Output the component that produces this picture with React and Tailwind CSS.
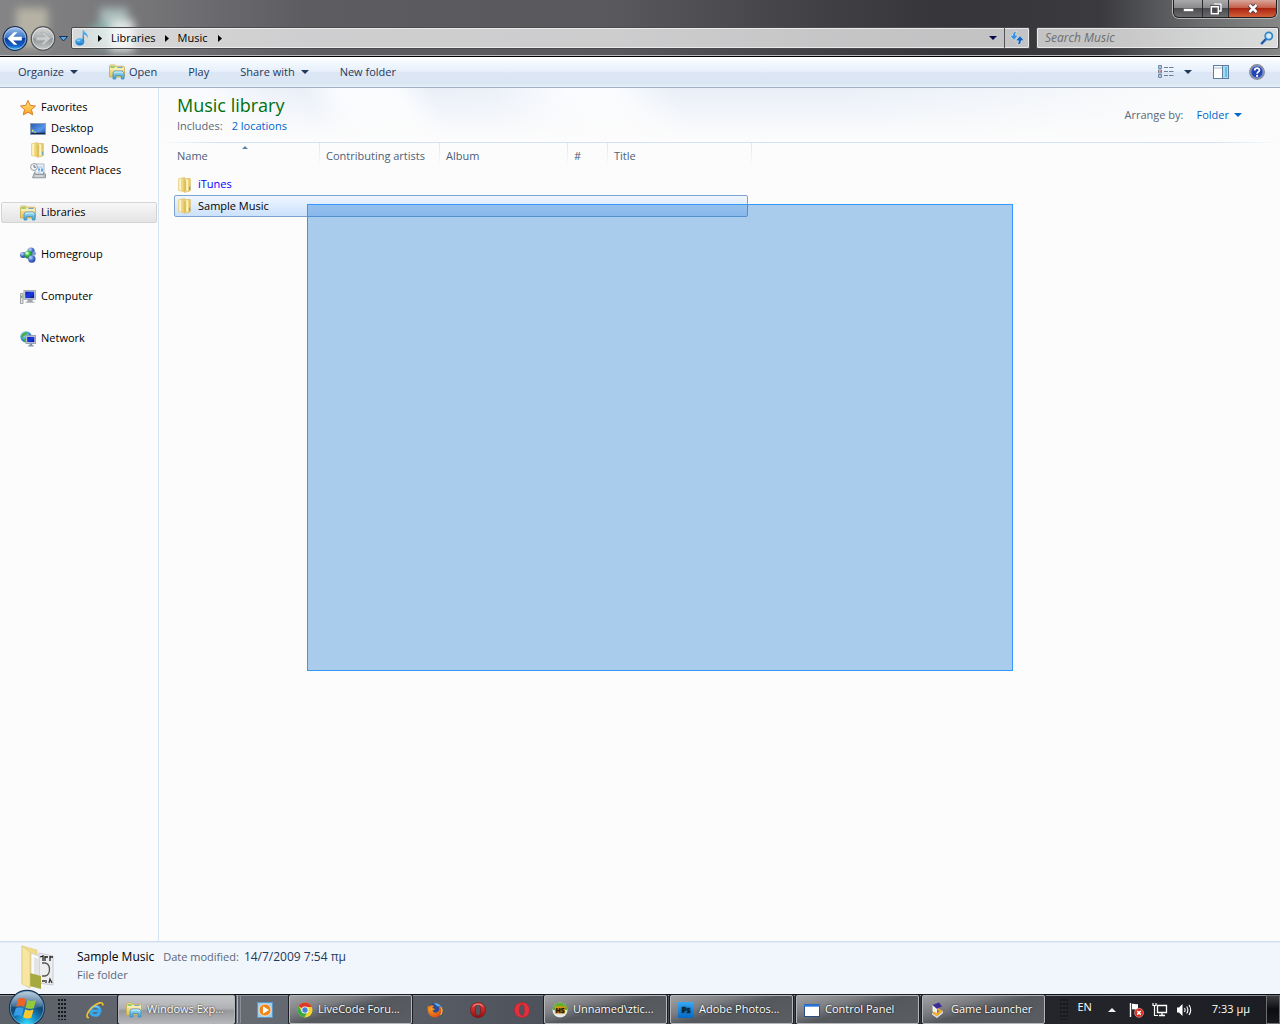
import React from "react";

const Svg = ({ size = "size-4", box = "0 0 16 16", children }) => (
  <svg className={`${size} shrink-0`} viewBox={box} aria-hidden="true">
    {children}
  </svg>
);

const Defs = () => (
  <svg className="absolute size-0" aria-hidden="true">
    <defs>
      <linearGradient id="gold" x1="0" y1="0" x2="1" y2="0">
        <stop offset="0" stopColor="#faefb0" />
        <stop offset="1" stopColor="#e6c863" />
      </linearGradient>
      <linearGradient id="goldV" x1="0" y1="0" x2="0" y2="1">
        <stop offset="0" stopColor="#fbf0ae" />
        <stop offset="1" stopColor="#e4c25c" />
      </linearGradient>
      <linearGradient id="aqua" x1="0" y1="0" x2="0" y2="1">
        <stop offset="0" stopColor="#a9e0f5" />
        <stop offset="1" stopColor="#3a9fd2" />
      </linearGradient>
      <linearGradient id="star" x1="0" y1="0" x2="0" y2="1">
        <stop offset="0" stopColor="#ffe98a" />
        <stop offset="1" stopColor="#f9a21c" />
      </linearGradient>
      <linearGradient id="screen" x1="0" y1="0" x2="1" y2="1">
        <stop offset="0" stopColor="#0a1fae" />
        <stop offset="0.5" stopColor="#1a3be0" />
        <stop offset="1" stopColor="#0a1488" />
      </linearGradient>
      <linearGradient id="desk" x1="0" y1="0" x2="1" y2="1">
        <stop offset="0" stopColor="#2458b8" />
        <stop offset="0.6" stopColor="#5b97e6" />
        <stop offset="1" stopColor="#1d4ba6" />
      </linearGradient>
      <radialGradient id="ballBlue" cx="0.35" cy="0.3" r="0.8">
        <stop offset="0" stopColor="#c8d8fa" />
        <stop offset="0.5" stopColor="#4a72cc" />
        <stop offset="1" stopColor="#1c3a94" />
      </radialGradient>
      <radialGradient id="ballGreen" cx="0.35" cy="0.3" r="0.8">
        <stop offset="0" stopColor="#a8f2a0" />
        <stop offset="0.5" stopColor="#2fae3a" />
        <stop offset="1" stopColor="#0d6a20" />
      </radialGradient>
      <radialGradient id="globe" cx="0.35" cy="0.3" r="0.8">
        <stop offset="0" stopColor="#b8ecfa" />
        <stop offset="0.6" stopColor="#2b8fcf" />
        <stop offset="1" stopColor="#0d4a8c" />
      </radialGradient>
      <linearGradient id="backBtn" x1="0" y1="0" x2="0" y2="1">
        <stop offset="0" stopColor="#a4c6ec" />
        <stop offset="0.48" stopColor="#3670c4" />
        <stop offset="0.5" stopColor="#0c3c9c" />
        <stop offset="0.8" stopColor="#1460c4" />
        <stop offset="1" stopColor="#40c4fa" />
      </linearGradient>
      <linearGradient id="fwdBtn" x1="0" y1="0" x2="0" y2="1">
        <stop offset="0" stopColor="#d8d8d8" />
        <stop offset="0.48" stopColor="#adb0b0" />
        <stop offset="0.52" stopColor="#8f9494" />
        <stop offset="1" stopColor="#c8cccc" />
      </linearGradient>
      <linearGradient id="note" x1="0" y1="0" x2="0" y2="1">
        <stop offset="0" stopColor="#5ec0f0" />
        <stop offset="1" stopColor="#1676c8" />
      </linearGradient>
      <radialGradient id="orb" cx="0.5" cy="0.95" r="0.95">
        <stop offset="0" stopColor="#38dcff" />
        <stop offset="0.3" stopColor="#178cc4" />
        <stop offset="0.6" stopColor="#0f4878" />
        <stop offset="1" stopColor="#547fa8" />
      </radialGradient>
      <linearGradient id="orbShine" x1="0" y1="0" x2="0" y2="1">
        <stop offset="0" stopColor="#fff" stopOpacity="0.6" />
        <stop offset="1" stopColor="#fff" stopOpacity="0.1" />
      </linearGradient>
      <linearGradient id="ps" x1="0" y1="0" x2="0" y2="1">
        <stop offset="0" stopColor="#3aa8f4" />
        <stop offset="1" stopColor="#0668c4" />
      </linearGradient>
      <linearGradient id="operaRed" x1="0" y1="0" x2="0" y2="1">
        <stop offset="0" stopColor="#e8443c" />
        <stop offset="1" stopColor="#9c0c10" />
      </linearGradient>
      <radialGradient id="fox" cx="0.3" cy="0.3" r="0.9">
        <stop offset="0" stopColor="#f8a020" />
        <stop offset="1" stopColor="#d83c10" />
      </radialGradient>
    </defs>
  </svg>
);

const Arrow = ({ className = "text-[#1e395b]" }) => (
  <svg className={`h-1 w-2 shrink-0 ${className}`} viewBox="0 0 8 4" aria-hidden="true">
    <path d="M0 0h8L4 4z" fill="currentColor" />
  </svg>
);

const LibrariesIcon = () => (
  <Svg>
    <path d="M.5 13V2.2L1.3 1h4.5l1 1.2h7.7l1 1V13z" fill="url(#goldV)" stroke="#c9a94c" strokeWidth=".8" />
    <path d="M1.500 3h4.200" stroke="#55b848" strokeWidth="1.200" />
    <path d="M8.500 3.400h5" stroke="#5a9ed6" strokeWidth="1" />
    <path d="M1 5h14" stroke="#fff8d0" strokeWidth="1" />
    <path d="M4 15V9l1.500-2h7.800L15 9v6h-2.700v-3.400H6.800V15z" fill="url(#aqua)" stroke="#3c8fbc" strokeWidth=".8" />
    <path d="M5 9.300L6 8h7l1 1.300" stroke="#e4f8ff" strokeWidth=".8" fill="none" />
  </Svg>
);

const FolderIcon = () => (
  <Svg>
    <path d="M1.500 1.800L7.500.5v14.200l-6-1.200z" fill="url(#gold)" stroke="#dfc267" strokeWidth=".6" />
    <path d="M7.500 1.600h5.800v12.200l-5.800 1.600z" fill="url(#gold)" stroke="#d2b050" strokeWidth=".6" />
    <path d="M7.300 4.200L9 2.400v11l-1.700 1.800z" fill="#e0bf58" />
    <path d="M3.200 2v11.400" stroke="#fffce6" strokeWidth="1" />
    <path d="M10.300 2.400v11.200" stroke="#fdf4c0" strokeWidth="1.400" />
    <path d="M12.700 9.500v3.500" stroke="#4a9fdc" strokeWidth="1" />
  </Svg>
);

const StarIcon = () => (
  <Svg>
    <path d="M8 .5l2.200 4.800 5.300.7-4 3.500 1.200 5.300L8 12.200l-4.700 2.600 1.200-5.300-4-3.500 5.300-.7z" fill="url(#star)" stroke="#dd7c26" strokeWidth="1" strokeLinejoin="round" />
  </Svg>
);

const DesktopIcon = () => (
  <Svg>
    <rect x=".5" y="2.500" width="15" height="11" fill="url(#desk)" stroke="#8ba0bc" />
    <path d="M1 12.400h14" stroke="#15284c" strokeWidth="1.400" />
    <path d="M2 9.200l1.500 1M4.500 11l1 .7" stroke="#f5dc50" strokeWidth="1.400" />
    <path d="M2 11l2-1.400" stroke="#7ee0f0" strokeWidth="1" />
  </Svg>
);

const RecentIcon = () => (
  <Svg>
    <path d="M5 1h9v10H5z" fill="#eef4fa" stroke="#9aa4ae" strokeWidth=".8" />
    <path d="M7.500 4h5M7.500 9h3" stroke="#8cc0e8" strokeWidth="1" />
    <path d="M8 5.500h2v2H8zM11 5.500h2v3h-2z" fill="#5aa6e0" />
    <path d="M4.500 9.500L2.500 14.800h13V11L13.500 9.500v2H6z" fill="#b2b8bd" stroke="#858c92" strokeWidth=".8" />
    <path d="M4.500 13h9" stroke="#eceff1" strokeWidth="1" />
    <circle cx="4" cy="4" r="3.400" fill="#f4f6f8" stroke="#8b959e" strokeWidth=".9" />
    <path d="M4 2v2.200h2" stroke="#54606a" strokeWidth=".9" fill="none" />
  </Svg>
);

const HomegroupIcon = () => (
  <Svg>
    <circle cx="11" cy="4" r="3.600" fill="url(#ballBlue)" />
    <circle cx="3" cy="8" r="3" fill="url(#ballBlue)" />
    <circle cx="14" cy="6.500" r="2" fill="#7c98dc" />
    <circle cx="8.400" cy="7.800" r="4" fill="url(#ballGreen)" />
    <circle cx="11.800" cy="12" r="3.700" fill="url(#ballBlue)" />
    <circle cx="7" cy="6.200" r="1.400" fill="#d8ffd4" opacity=".8" />
  </Svg>
);

const ComputerIcon = () => (
  <Svg>
    <path d="M.5 4.500h2.500v10H.5z" fill="#dfe2e4" stroke="#8e9498" strokeWidth=".8" />
    <path d="M1.700 6.500v2.500" stroke="#52b848" strokeWidth="1.200" />
    <rect x="3.900" y="1.400" width="11.600" height="9" fill="#d6d8dc" stroke="#9ea2a8" strokeWidth=".8" />
    <rect x="5.200" y="2.600" width="9" height="6.600" fill="url(#screen)" />
    <path d="M8 10.600h4l1 2.400H7z" fill="#9ca2a6" />
    <path d="M5.500 13.300h9" stroke="#b4b8bc" strokeWidth="1.200" />
  </Svg>
);

const NetworkIcon = () => (
  <Svg>
    <circle cx="6" cy="5.800" r="5.600" fill="url(#globe)" />
    <path d="M2 3.400c2-2.400 4-2.400 5-1.800S6 4.400 4.800 4.600 3 7.400 1.400 6.400 1.600 4 2 3.400zM4 8c1.600 0 2.600.8 2 2.200s-1.600.6-2 0-1-2 0-2.200z" fill="#42b04c" />
    <rect x="6" y="4.600" width="9.600" height="7.800" fill="#d8dade" stroke="#8c9298" strokeWidth=".8" />
    <rect x="7.200" y="5.800" width="7.200" height="5.400" fill="url(#screen)" />
    <path d="M9.600 12.600h2.600v1.600h1.600v1.300H8.200v-1.300h1.400z" fill="#7f95ae" />
  </Svg>
);

const NoteIcon = () => (
  <Svg size="size-[18px]" box="0 0 18 18">
    <ellipse cx="5.800" cy="12.800" rx="4.600" ry="3.800" fill="url(#note)" />
    <path d="M8.600 12.600V1.200h1.200c.4 2.400 5 3 3.600 8-.3-2.400-1.600-3.400-3.400-3.600v7" fill="url(#note)" />
    <ellipse cx="4.600" cy="11.600" rx="1.600" ry="1" fill="#a4e0fa" opacity=".8" />
  </Svg>
);

const CrumbArrow = () => (
  <svg className="h-[7px] w-1 shrink-0" viewBox="0 0 4 7" aria-hidden="true">
    <path d="M0 0l4 3.500L0 7z" fill="#000" />
  </svg>
);

function TitleBar() {
  return (
    <header className="relative overflow-hidden border-b border-black bg-[linear-gradient(90deg,#858587_0%,#747477_12%,#5c5c61_24%,#58585d_48%,#414145_64%,#36363a_74%,#3b3b3f_86%,#6c6e6f_94%,#858787_100%)] shadow-[inset_0_-1px_0_#b8babc]">
      <div className="absolute top-2 left-4 h-10 w-8 bg-[#d8d3bb] opacity-60 blur-xs" />
      <div className="absolute top-2 left-[100px] h-6 w-7 bg-[#bfd8d4] opacity-70 blur-xs" />
      <div className="absolute top-6 left-[88px] h-6 w-8 rounded-full bg-[#7fb2ac] opacity-80 blur-xs" />
      <div className="absolute top-5 left-[110px] h-8 w-6 bg-[#f0f5f3] opacity-80 blur-xs" />
      <div className="relative flex h-[26px] items-start justify-end pr-[3px]">
        <div className="flex h-[18px] divide-x divide-[#2b2b2d] overflow-hidden rounded-b-md border border-t-0 border-[#202022] shadow-[0_0_0_1px_#b5b5b8]">
          <button aria-label="Minimize" className="flex w-[29px] items-end justify-center bg-[linear-gradient(#aaa_0%,#88888b_48%,#4c4c50_50%,#6a6a6d_100%)] pb-[5px]">
            <svg className="h-1 w-[11px]" viewBox="0 0 11 4"><rect x=".5" y=".5" width="10" height="3" fill="#fff" stroke="#55565f" strokeWidth=".6" /></svg>
          </button>
          <button aria-label="Restore" className="flex w-[26px] items-center justify-center bg-[linear-gradient(#aaa_0%,#88888b_48%,#4c4c50_50%,#6a6a6d_100%)]">
            <svg className="size-3" viewBox="0 0 12 12"><path d="M4 .8h7.200V8H9M1 3.500h7.500V11H1z" fill="none" stroke="#44454c" strokeWidth="2.400" /><path d="M4 1h7v7H9M1.300 3.800h7v7h-7z" fill="none" stroke="#fff" strokeWidth="1.500" /><path d="M3.500 6h2.500v2.500H3.500z" fill="#44454c" /></svg>
          </button>
          <button aria-label="Close" className="flex w-[47px] items-center justify-center bg-[linear-gradient(#d9a79c_0%,#c5604a_45%,#ab2410_50%,#d2603a_100%)]">
            <svg className="h-[11px] w-3" viewBox="0 0 12 11"><path d="M2.500 1.800l7 7.400M9.500 1.800l-7 7.400" stroke="#53404a" strokeWidth="4.400" /><path d="M2.500 1.800l7 7.400M9.500 1.800l-7 7.400" stroke="#fff" strokeWidth="2.600" /></svg>
          </button>
        </div>
      </div>
      <div className="relative flex h-[30px] items-start pr-px pl-[2px]">
        <div className="flex items-center">
          <button aria-label="Back" className="size-[26px]">
            <svg className="size-full" viewBox="0 0 26 26">
              <circle cx="13" cy="12.500" r="11.900" fill="url(#backBtn)" stroke="#1b2c54" strokeWidth="1.200" />
              <circle cx="13" cy="12.500" r="10.800" fill="none" stroke="#dce8f6" strokeWidth=".8" opacity=".7" />
              <path d="M5.500 12.500L12 6.300h3.400l-4.200 4.400h8.600v3.700h-8.600l4.200 4.400H12z" fill="#fff" />
            </svg>
          </button>
          <button aria-label="Forward" className="ml-[2px] size-[26px]">
            <svg className="size-full" viewBox="0 0 26 26">
              <circle cx="13" cy="12.500" r="11.700" fill="url(#fwdBtn)" stroke="#55585a" strokeWidth="1.400" />
              <circle cx="13" cy="12.500" r="10.600" fill="none" stroke="#e6e8e8" strokeWidth=".8" />
              <path d="M20.500 12.500L14 6.300h-3.400l4.200 4.400H6.200v3.700h8.600l-4.200 4.400H14z" fill="#c9cccc" stroke="#a4a8a8" strokeWidth=".6" />
            </svg>
          </button>
          <button aria-label="Recent pages" className="ml-[3px] flex h-[26px] w-[9px] items-center">
            <svg className="h-[6px] w-[9px]" viewBox="0 0 9 6"><path d="M.5.5h8L4.500 5z" fill="#58a8ea" stroke="#12345c" /></svg>
          </button>
        </div>
        <div className="mt-px ml-[3px] flex h-[22px] min-w-0 flex-1 items-stretch rounded-xs border border-[#4a4a4d] bg-white/70 shadow-[inset_0_0_0_1px_#f2f2f2cc]">
          <nav aria-label="Address" className="flex min-w-0 flex-1 items-center pl-[2px] text-[11px] text-black">
            <NoteIcon />
            <span className="ml-[6px] flex items-center"><CrumbArrow /></span>
            <a href="#libraries" className="ml-[9px]">Libraries</a>
            <span className="ml-[9px] flex items-center"><CrumbArrow /></span>
            <a href="#music" className="ml-[9px]">Music</a>
            <span className="ml-[10px] flex items-center"><CrumbArrow /></span>
          </nav>
          <button aria-label="Previous locations" className="flex w-[22px] items-center justify-center"><Arrow className="text-[#0a0a50]" /></button>
          <button aria-label="Refresh" className="flex w-[25px] items-center justify-center border-l border-[#555]">
            <Svg>
              <path d="M7.500 1.500C5 1.500 4 3 4 5.500H1L5 10l4-4.500H6.300C6.300 4 6.500 2.500 7.500 1.500z" fill="#3f94e0" stroke="#f4f8fc" strokeWidth="1" paintOrder="stroke" />
              <path d="M8.500 14.500c2.500 0 3.500-1.500 3.500-4h3L11 6l-4 4.500h2.700c0 1.500-.2 3-1.200 4z" fill="#1a66ba" stroke="#f4f8fc" strokeWidth="1" paintOrder="stroke" />
            </Svg>
          </button>
        </div>
        <div className="mt-px ml-[6px] flex h-[22px] w-[243px] shrink items-center rounded-xs border border-[#4a4a4d] bg-white/70 pr-1 pl-2 shadow-[inset_0_0_0_1px_#f2f2f2cc]">
          <input aria-label="Search Music" placeholder="Search Music" className="min-w-0 flex-1 bg-transparent text-[12px] italic outline-none placeholder:text-[#6d6d6d]" />
          <Svg size="size-[14px]" box="0 0 14 14">
            <path d="M6.400 7.600L1.800 12.300" stroke="#1d5fae" strokeWidth="2.400" strokeLinecap="round" />
            <circle cx="8.800" cy="5" r="3.600" fill="#d4eaf8" stroke="#3386cc" strokeWidth="1.700" />
          </Svg>
        </div>
      </div>
    </header>
  );
}

function Toolbar() {
  return (
    <div className="flex h-[31px] shrink-0 items-center border-b border-[#a0afc3] bg-[linear-gradient(#fdfeff_0%,#f3f8fe_20%,#e6effa_48%,#dce6f4_52%,#dbe6f4_88%,#e8f1fb_100%)] px-[11px] text-[11px] text-[#1e395b]">
      <div className="flex items-center gap-[17px]">
        <button className="flex items-center gap-[6px] px-[7px]">Organize <Arrow /></button>
        <button className="flex items-center gap-1 px-[7px]"><LibrariesIcon />Open</button>
        <button className="px-[7px]">Play</button>
        <button className="flex items-center gap-[6px] px-[7px]">Share with <Arrow /></button>
        <button className="px-[7px]">New folder</button>
      </div>
      <div className="ml-auto flex items-center">
        <button aria-label="Change view" className="flex items-center">
          <Svg>
            <path d="M.5 1.500h3v3h-3zM.5 6h3v3h-3zM.5 10.500h3v3h-3z" fill="#fff" stroke="#7187a6" />
            <path d="M2 2.200v1.500M2 11.200v1.500" stroke="#3c6a9c" />
            <path d="M1.500 7.500h1.200" stroke="#e03030" strokeWidth="1.500" />
            <path d="M6 3.500h4M11 3.500h4.500M6 7.500h4M11 7.500h4.500M6 11.500h4M11 11.500h4.500" stroke="#6b7f9a" />
          </Svg>
        </button>
        <button aria-label="More views" className="ml-[10px] flex h-4 items-center"><Arrow /></button>
        <button aria-label="Preview pane" className="ml-[21px]">
          <Svg>
            <rect x=".5" y="1.500" width="15" height="13" fill="#fff" stroke="#5f7da3" />
            <path d="M1 4h9" stroke="#a4b8d0" />
            <rect x="10" y="2" width="5" height="12" fill="#a2dcf2" />
            <path d="M9.500 2v12" stroke="#5f7da3" />
            <path d="M12 3h2v10h-2z" fill="#68bfe2" />
          </Svg>
        </button>
        <button aria-label="Help" className="mr-1 ml-5">
          <Svg>
            <circle cx="8" cy="8" r="7.300" fill="#2244b4" stroke="#8e8e92" strokeWidth="1.300" />
            <circle cx="8" cy="8" r="6.200" fill="none" stroke="#d8d8e0" strokeWidth=".7" />
            <path d="M5.700 6.400C5.700 3.300 10.500 3.400 10.400 6.200 10.300 7.900 8.100 7.900 8.100 9.800" fill="none" stroke="#fff" strokeWidth="1.800" />
            <circle cx="8.100" cy="11.900" r="1.100" fill="#fff" />
          </Svg>
        </button>
      </div>
    </div>
  );
}

const NavItem = ({ icon, label, child, selected }) => (
  <li>
    <a
      href={`#${label}`}
      className={`mr-px ml-px flex h-[21px] items-center gap-[5px] ${child ? "pl-7" : "pl-[18px]"} ${
        selected ? "rounded-xs border border-[#d4d4d4] bg-[linear-gradient(#f7f7f7,#e4e4e4)]" : "border border-transparent"
      }`}
    >
      {icon}
      {label}
    </a>
  </li>
);

function Sidebar() {
  return (
    <nav aria-label="Folders" className="w-[159px] shrink-0 border-r border-[#d6e5f5] pt-[9px] text-[11px] text-black">
      <ul className="flex flex-col gap-[21px]">
        <li>
          <ul>
            <NavItem icon={<StarIcon />} label="Favorites" />
            <NavItem icon={<DesktopIcon />} label="Desktop" child />
            <NavItem icon={<FolderIcon />} label="Downloads" child />
            <NavItem icon={<RecentIcon />} label="Recent Places" child />
          </ul>
        </li>
        <NavItem icon={<LibrariesIcon />} label="Libraries" selected />
        <NavItem icon={<HomegroupIcon />} label="Homegroup" />
        <NavItem icon={<ComputerIcon />} label="Computer" />
        <NavItem icon={<NetworkIcon />} label="Network" />
      </ul>
    </nav>
  );
}

const Th = ({ children, first }) => (
  <th
    scope="col"
    className={`relative h-[22px] border-r [border-image:linear-gradient(#d8e6f5,#fcfcfc)_1] pt-1 text-left font-normal whitespace-nowrap ${first ? "pl-[3px]" : "pl-[6px]"}`}
  >
    {children}
  </th>
);

function Content() {
  return (
    <main className="min-w-0 flex-1">
      <div className="flex h-[54px] items-start justify-between bg-[linear-gradient(rgba(252,252,252,0),#fcfcfc_95%),linear-gradient(62deg,#fcfcfc_0%,#f8fafd_7%,#edf1f9_12%,#e9eff8_15%,#fafcff_18%,#fbfcff_23%,#e9eff8_26%,#ebf0f8_31%,#fbfcff_38%,#fbfcff_42%,#e9eff8_47%,#e9eff8_62%,#fcfcfc_94%)] pr-[38px] pl-[18px]">
        <div>
          <h1 className="pt-[5px] text-[18px] leading-[25px] text-[#00700f]">Music library</h1>
          <p className="flex gap-[9px] text-[11px] leading-4 text-[#5a6779]">Includes: <a href="#locations" className="text-[#0066cc]">2 locations</a></p>
        </div>
        <div className="mt-[19px] flex items-center gap-[13px] text-[11px] leading-4 text-[#5a6779]">
          Arrange by:
          <button className="flex items-center gap-[5px] text-[#0066cc]">Folder <Arrow className="text-[#0066cc]" /></button>
        </div>
      </div>
      <div className="h-px bg-[linear-gradient(90deg,transparent,#d2e3f5_5%,#d2e3f5_94%,transparent)]" />
      <table className="ml-[15px] w-[578px] table-fixed border-separate border-spacing-0 text-[11px] text-[#4c607a]">
        <colgroup>
          <col className="w-[146px]" /><col className="w-[120px]" /><col className="w-[128px]" /><col className="w-[40px]" /><col className="w-[144px]" />
        </colgroup>
        <thead>
          <tr>
            <Th first>
              Name
              <svg className="absolute top-[2px] left-[67px] h-1 w-2" viewBox="0 0 8 4"><path d="M1 4l3-3 3 3z" fill="#5c86a8" /></svg>
            </Th>
            <Th>Contributing artists</Th>
            <Th>Album</Th>
            <Th>#</Th>
            <Th>Title</Th>
          </tr>
        </thead>
        <tbody>
          <tr>
            <td colSpan={5} className="pt-[9px] pr-1">
              <div className="flex h-[21px] items-center gap-[5px] pl-[3px] text-[#0000ff]"><FolderIcon />iTunes</div>
            </td>
          </tr>
          <tr aria-selected="true">
            <td colSpan={5} className="pr-1">
              <div className="flex h-[22px] items-center gap-[5px] rounded-xs border border-[#7da2ce] bg-[linear-gradient(#f0f6fe,#cbe1fc)] pl-[2px] text-black"><FolderIcon />Sample Music</div>
            </td>
          </tr>
        </tbody>
      </table>
    </main>
  );
}

function Details() {
  return (
    <footer className="flex h-[53px] shrink-0 items-start border-t border-[#d0dfee] bg-[#f1f5fc] pl-[18px] shadow-[inset_0_1px_0_#e4ecf6]">
      <svg className="mt-[3px] h-[45px] w-10" viewBox="0 0 40 45" aria-hidden="true">
        <path d="M4 1l15 4v34l-8 3-7-4z" fill="#f0dc88" stroke="#dcc678" strokeWidth=".6" />
        <path d="M21 8l14 3v29l-14-2z" fill="#eceef0" stroke="#b8bcc0" strokeWidth=".7" />
        <path d="M13 8l8 3v32l-8-4z" fill="#fafafa" stroke="#c6c8cc" strokeWidth=".7" />
        <path d="M16 12l5 2v26l-5-3z" fill="#e2e4e6" />
        <path d="M22 12l3-1v5M27 11v5M27 12h3M32 11v5M32 12h3" stroke="#222" strokeWidth="1.300" fill="none" />
        <path d="M24 18h3c6 1 6 12 0 13h-3" stroke="#555" strokeWidth="1.300" fill="none" />
        <path d="M24 36h3M28 35v3M31 38l1-4 2 4" stroke="#333" strokeWidth="1.300" fill="none" />
        <path d="M12 28l11 3v13l-11-3z" fill="#a6a840" />
        <path d="M4 1l8 6v36l-8-4z" fill="#f6e6a2" stroke="#dcc678" strokeWidth=".6" />
      </svg>
      <div className="ml-[19px] pt-[6px] text-[11px] leading-[18px] text-[#5a6779]">
        <div className="flex gap-[5px]">
          <span className="text-[12px] text-black">Sample Music</span>
          <span className="ml-1">Date modified:</span>
          <span className="text-[12px] text-[#1e395b]">14/7/2009 7:54 πμ</span>
        </div>
        <div>File folder</div>
      </div>
    </footer>
  );
}

const TaskButton = ({ icon, label, active, className = "w-[123px]" }) => (
  <button
    className={`flex h-[29px] min-w-0 items-center gap-[5px] rounded-xs border border-[#b4b6ba] pl-[7px] text-[11px] whitespace-nowrap text-white shadow-[0_0_0_1px_#1c1e22] [text-shadow:0_0_2px_#000] ${className} ${
      active
        ? "bg-[linear-gradient(#c4c6c8_0%,#b0b2b5_45%,#96989c_55%,#b4b6b9_100%)]"
        : "bg-[linear-gradient(165deg,#a0a2a5_0%,#7c7e82_30%,#55585d_50%,#5a5d62_100%)]"
    }`}
  >
    {icon}
    {label}
  </button>
);

const Pinned = ({ label, className, children }) => (
  <button aria-label={label} className={`flex h-[29px] shrink-0 items-center justify-center ${className}`}>{children}</button>
);

const Grip = ({ className = "" }) => (
  <div className={`h-[21px] w-[9px] shrink-0 bg-[linear-gradient(#16181c,#16181c)] [mask-image:conic-gradient(from_270deg_at_2px_2px,#000_90deg,transparent_0)] mask-size-[3px_4px] ${className}`} />
);

const IeIcon = () => (
  <Svg size="size-[18px]" box="0 0 18 18">
    <path d="M13.800 11.500c-2.300 4.600-9.600 3.400-9.300-2 .3-5.200 9.400-5.600 9.600.3H6" fill="none" stroke="#38a8ec" strokeWidth="2.800" />
    <path d="M4 8.800C6 4.600 11 4.500 13.500 7" fill="none" stroke="#a4e0fc" strokeWidth=".8" />
    <path d="M3 16.500C-.8 17 1 11 6 6.500 11 1.800 17.500-.5 16.800 4.500" fill="none" stroke="#f4c430" strokeWidth="1.600" />
  </Svg>
);

const ChromeIcon = () => (
  <Svg>
    <circle cx="8" cy="8" r="7.500" fill="#f5d22c" />
    <path d="M8 8L1.500 4.200A7.500 7.500 0 0 1 14.500 4.300L15 5H8z" fill="#dc3a2c" />
    <path d="M1.500 4.200A7.500 7.500 0 0 0 7.300 15.500L10.800 9.500 5 9.800z" fill="#3fa648" />
    <circle cx="8" cy="8" r="3.600" fill="#fff" />
    <circle cx="8" cy="8" r="2.700" fill="#3f82dc" />
  </Svg>
);

const OperaIcon = ({ flat }) => (
  <Svg>
    <path
      fillRule="evenodd"
      d="M8 .5C3.600.5.500 3.500.500 8s3.100 7.500 7.500 7.500 7.500-3 7.500-7.500S12.400.500 8 .500zM8 2.200c1.800 0 2.600 2.500 2.600 5.800S9.800 13.800 8 13.800 5.400 11.300 5.400 8 6.200 2.200 8 2.200z"
      fill={flat ? "#e4303c" : "url(#operaRed)"}
      stroke={flat ? "#b81c28" : "#641014"}
      strokeWidth=".5"
    />
    {!flat && <path d="M3 4.500C5 1.500 11 1.500 13 4.500" stroke="#f8b4a8" strokeWidth=".8" fill="none" />}
  </Svg>
);

function Taskbar() {
  return (
    <div className="relative flex h-[30px] shrink-0 items-center border-t border-[#0c0d10] bg-[linear-gradient(90deg,#5c6068_0%,#666a72_20%,#4e525a_42%,#41444c_60%,#25272c_80%,#1c1d22_100%)] shadow-[inset_0_1px_0_#8c9098]">
      <button aria-label="Start" className="relative -mt-1 ml-2 size-[38px] shrink-0">
        <svg className="size-full" viewBox="0 0 38 38">
          <circle cx="19" cy="19" r="17.600" fill="url(#orb)" stroke="#1d3550" strokeWidth="1.200" />
          <circle cx="19" cy="19" r="16.600" fill="none" stroke="#a8d0ec" strokeWidth=".7" opacity=".7" />
          <path d="M3.500 17C4 7.500 11 2.800 19 2.800S34 7.500 34.500 17c-8 4-22 4-31 0z" fill="url(#orbShine)" />
          <path d="M10.300 9.800c2.800-1.300 5.400-1.200 7.900.3l-2.100 7.900c-2.500-1.400-5.100-1.500-7.900-.3z" fill="#ee6428" />
          <path d="M19.600 10.900c2.900 1.400 5.500 1.300 8.500.1l-2.200 8c-3 1.300-5.800 1.100-8.400-.3z" fill="#96c83c" />
          <path d="M7.800 19.300c2.800-1.300 5.400-1.200 7.900.2l-2.100 7.900c-2.500-1.400-5.200-1.500-7.900-.3z" fill="#38a0e8" />
          <path d="M17.200 20.300c2.700 1.400 5.400 1.500 8.400.3l-2.200 8c-2.900 1.300-5.600 1.100-8.300-.4z" fill="#fcc830" />
        </svg>
      </button>
      <Grip className="ml-3" />
      <Pinned label="Internet Explorer" className="ml-1 w-[47px]"><IeIcon /></Pinned>
      <TaskButton active icon={<LibrariesIcon />} label="Windows Exp..." className="w-[117px]" />
      <div className="h-[29px] w-[3px] shrink-0 rounded-r-xs border-r border-[#b4b6ba]" />
      <div className="h-[29px] w-[3px] shrink-0 rounded-r-xs border-r border-[#8c8f94]" />
      <Pinned label="Media Player" className="w-12">
        <Svg>
          <rect x=".5" y=".5" width="15" height="15" fill="#a4cdea" stroke="#5a98c8" />
          <circle cx="8" cy="8" r="6" fill="#f08618" stroke="#fff" strokeWidth=".6" />
          <path d="M6 4.300L12 8l-6 3.700z" fill="#fff" />
        </Svg>
      </Pinned>
      <TaskButton icon={<ChromeIcon />} label="LiveCode Foru..." />
      <Pinned label="Firefox" className="w-[45px]">
        <Svg>
          <circle cx="8" cy="8" r="7" fill="#2b4c98" />
          <path d="M7 1.400c4-.8 7 1.600 7.600 5-1-1.600-2.500-2.200-4-2z" fill="#5cb0e4" />
          <path d="M1.200 3.200c.2 1 .5 1.200 1 1.200C4 2.600 6 3 7 4.400c-1 .2-1.600.8-1.500 1.800l2.400.6c-.2 1-1.400 1.500-2.400 2C6 11 10 11.500 11.800 8.800c1-1.600.4-3.600-.6-4.600 3.600.6 4.500 4 3.800 6.400C13 17 3 17 1.200 10.500.4 7.800.4 5 1.200 3.200z" fill="url(#fox)" />
          <path d="M14 5c1.500 2.500 1.400 5.500-.4 7.800" stroke="#fbd448" strokeWidth="1" fill="none" />
        </Svg>
      </Pinned>
      <Pinned label="Opera" className="w-[42px]"><OperaIcon /></Pinned>
      <Pinned label="Opera Next" className="w-[45px]"><OperaIcon flat /></Pinned>
      <div className="flex min-w-0 gap-[3px]">
        <TaskButton
          icon={
            <Svg>
              <circle cx="8" cy="8" r="7.500" fill="#e8ece4" />
              <path d="M.5 8a7.500 7.500 0 0 1 15 0z" fill="#62b02c" />
              <rect x="3" y="4.500" width="10" height="7" fill="#f6a41c" />
              <text x="8" y="10.700" textAnchor="middle" fontSize="7" fontWeight="700" fill="#1a1208">HS</text>
            </Svg>
          }
          label="Unnamed\ztic..."
        />
        <TaskButton
          icon={
            <Svg>
              <rect width="16" height="16" fill="url(#ps)" />
              <text x="8" y="10.500" textAnchor="middle" fontSize="8" fontWeight="700" fill="#08243c">Ps</text>
            </Svg>
          }
          label="Adobe Photos..."
        />
        <TaskButton
          icon={
            <Svg>
              <rect x=".5" y="2.500" width="15" height="12" fill="#fff" stroke="#2c4c84" />
              <path d="M0 3.500h16" stroke="#2c78d8" strokeWidth="2.400" />
            </Svg>
          }
          label="Control Panel"
        />
        <TaskButton
          icon={
            <Svg>
              <path d="M2.500 3L9 .5l3 4-6 2.500z" fill="#3a2c98" />
              <path d="M2.500 3v6.500L7 12V7z" fill="#f4f0e8" />
              <path d="M7.500 6l5.500 3-6 5.500-5-3.500 2-1.500 3 2 2.500-2.500-2-1z" fill="#f6ae24" />
              <path d="M2 11l5 3.500 6-5.500v2L7 16l-5-3.500z" fill="#e8e8ec" />
            </Svg>
          }
          label="Game Launcher"
        />
      </div>
      <div className="ml-auto flex h-[29px] shrink-0 items-center text-[11px] text-white">
        <Grip />
        <button aria-label="Language" className="ml-2 pb-1">EN</button>
        <button aria-label="Show hidden icons" className="ml-4">
          <svg className="h-1 w-2" viewBox="0 0 8 4"><path d="M0 4L4 0l4 4z" fill="#f0f0f0" /></svg>
        </button>
        <button aria-label="Action Center" className="ml-3">
          <Svg>
            <path d="M2.500 1v14" stroke="#fff" strokeWidth="1.400" />
            <path d="M4 2c2-1 3.500 1 6 0v5.500c-2.500 1-4-1-6 0z" fill="#fff" />
            <circle cx="11" cy="10.800" r="4.500" fill="#d42c20" stroke="#f0b0a8" strokeWidth=".6" />
            <path d="M9.200 9l3.600 3.600M12.800 9l-3.600 3.600" stroke="#fff" strokeWidth="1.500" />
          </Svg>
        </button>
        <button aria-label="Network" className="ml-2">
          <Svg>
            <path d="M5.500 3.500h9v7h-9zM10 11v2.500M7 13.500h6" fill="none" stroke="#fff" strokeWidth="1.300" />
            <path d="M1 1v2.500h3V1M2.500 3.500V13.500H6" fill="none" stroke="#fff" strokeWidth="1.200" />
          </Svg>
        </button>
        <button aria-label="Volume" className="ml-2">
          <Svg>
            <path d="M1 5.500h2L6.500 2v12L3 10.500H1z" fill="#fff" />
            <path d="M8.500 6c.8 1.300.8 2.700 0 4M10.700 4.500c1.500 2.200 1.500 4.800 0 7M13 3c2.200 3.200 2.200 6.800 0 10" fill="none" stroke="#fff" strokeWidth="1.100" />
          </Svg>
        </button>
        <time className="ml-5">7:33 μμ</time>
        <button aria-label="Show desktop" className="ml-4 h-[29px] w-[14px] border border-[#6c6e72] bg-[linear-gradient(#3c3e42,#0c0d10_50%,#18191c)]" />
      </div>
    </div>
  );
}

export default function App() {
  return (
    <div className="relative flex min-h-screen flex-col bg-[#fcfcfc] font-['Open_Sans','Noto_Sans',sans-serif]">
      <Defs />
      <TitleBar />
      <Toolbar />
      <div className="flex flex-1">
        <Sidebar />
        <Content />
      </div>
      <Details />
      <Taskbar />
      <div className="pointer-events-none absolute top-[204px] left-[307px] h-[467px] w-[706px] border border-[#3399ff] bg-[#0066cc]/33" />
    </div>
  );
}
